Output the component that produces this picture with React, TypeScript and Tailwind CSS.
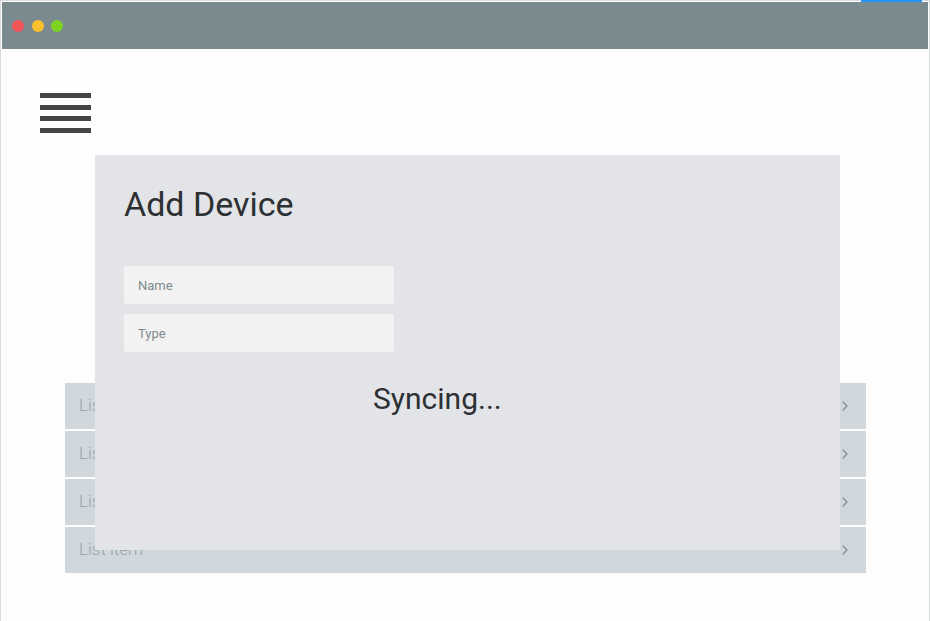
import { Fragment } from "react";

const items = ["List item", "List item", "List item", "List item"];

function Chevron() {
  return (
    <svg width="6" height="10" viewBox="0 0 6 10" fill="none" className="text-[#8a8f94]">
      <path d="M1 1l4 4-4 4" stroke="currentColor" strokeWidth="1.4" strokeLinecap="round" strokeLinejoin="round" />
    </svg>
  );
}

export default function App() {
  return (
    <div className="relative h-[621px] w-[930px] overflow-hidden bg-white font-['Roboto',sans-serif]">
      <div className="absolute right-[8px] top-0 h-[2px] w-[61px] bg-[#2196f3]" />
      <div className="flex h-full flex-col border-x border-t border-[#d9dcdd] pt-px">
        {/* title bar */}
        <div className="mx-px flex h-[47px] items-center gap-[7.5px] bg-[#7a8a8f] pl-[10px]">
          <span className="h-[12px] w-[12px] rounded-full bg-[#f0555a]" />
          <span className="h-[12px] w-[12px] rounded-full bg-[#fbc02d]" />
          <span className="h-[12px] w-[12px] rounded-full bg-[#7ed321]" />
        </div>

        <div className="flex-1 bg-[#fdfdfd] px-[39px] pt-[44px]">
          <div className="flex w-[51px] flex-col gap-[6.5px]">
            <span className="h-[5px] bg-[#444444]" />
            <span className="h-[5px] bg-[#444444]" />
            <span className="h-[5px] bg-[#444444]" />
            <span className="h-[5px] bg-[#444444]" />
          </div>

          <ul className="ml-[25px] mt-[250px] flex w-[801px] flex-col gap-[2px]">
            {items.map((item, i) => (
              <Fragment key={i}>
                <li className="flex h-[46px] items-center justify-between bg-[#d0d8de] pl-[14px] pr-[18px]">
                  <span className="text-[17px] font-light text-[#9aa1a7]">{item}</span>
                  <Chevron />
                </li>
              </Fragment>
            ))}
          </ul>
        </div>
      </div>

      {/* modal */}
      <div className="absolute left-[95px] top-[155px] flex h-[395px] w-[745px] flex-col bg-[#e3e4e8] pl-[29px] pt-[29px]">
        <h2 className="text-[34px] leading-[40px] text-[#2d3033]">Add Device</h2>
        <div className="mt-[42px] flex w-[270px] flex-col gap-[10px]">
          <input
            placeholder="Name"
            className="h-[38px] rounded-[2px] bg-[#f2f2f2] px-[14px] text-[13px] text-[#333] outline-none placeholder:text-[#7d8a90]"
          />
          <input
            placeholder="Type"
            className="h-[38px] rounded-[2px] bg-[#f2f2f2] px-[14px] text-[13px] text-[#333] outline-none placeholder:text-[#7d8a90]"
          />
        </div>
        <p className="mt-[29px] pl-[249px] text-[30px] leading-[36px] text-[#2d3033]">Syncing...</p>
      </div>
    </div>
  );
}
